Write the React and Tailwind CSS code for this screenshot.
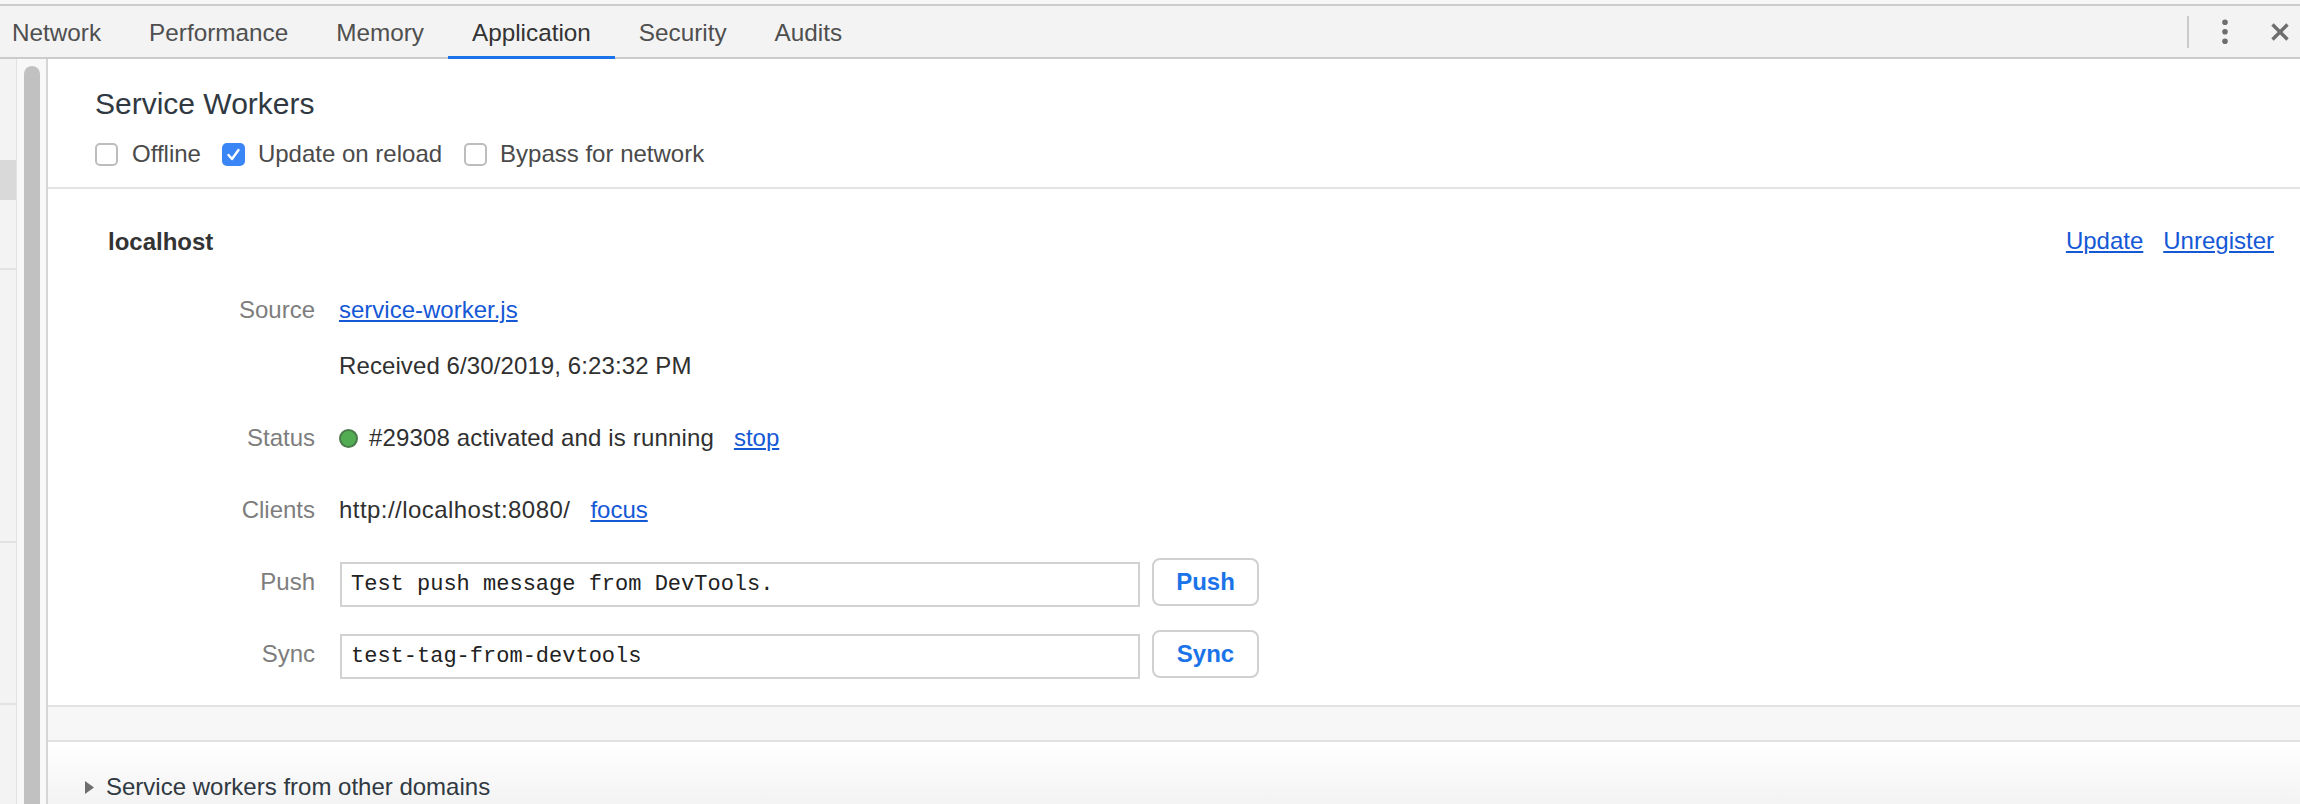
import React from 'react';

const tabs = ['Network', 'Performance', 'Memory', 'Application', 'Security', 'Audits'];

function Checkbox({ checked }) {
  if (checked) {
    return (
      <span className="w-[23px] h-[23px] rounded-[5px] bg-[#3b86f7] flex items-center justify-center shrink-0">
        <svg width="23" height="23" viewBox="0 0 23 23">
          <polyline points="6.5,12 10,16 16.5,7" fill="none" stroke="white" strokeWidth="2.4" strokeLinecap="round" strokeLinejoin="round" />
        </svg>
      </span>
    );
  }
  return <span className="w-[23px] h-[23px] rounded-[5px] border-2 border-[#bdbdbd] bg-white shrink-0" />;
}

function Field({ label, children, className = '' }) {
  return (
    <div className={`flex items-center ${className}`}>
      <div className="w-[207px] shrink-0 text-right text-[#7d7d7d]">{label}</div>
      <div className="ml-[24px] flex items-center">{children}</div>
    </div>
  );
}

function Link({ children, className = '' }) {
  return (
    <a href="#" className={`text-[#1558d6] underline decoration-2 underline-offset-2 ${className}`}>
      {children}
    </a>
  );
}

export default function App() {
  return (
    <div className="w-[2300px] h-[804px] overflow-hidden flex flex-col bg-white font-['Liberation_Sans',Arial,sans-serif] text-[24px] leading-[24px]">
      {/* window strip */}
      <div className="h-[6px] shrink-0 bg-[#f7f7f7] border-b-2 border-[#cdcdcd]" />

      {/* Tab bar */}
      <div className="h-[53px] shrink-0 flex bg-[#f3f3f3] border-b-2 border-[#cbcbcb]">
        <div className="flex -ml-[12px] text-[24.3px]">
          {tabs.map((t) => (
            <div
              key={t}
              className={`relative flex items-center px-[24px] pt-[2px] ${t === 'Application' ? 'text-[#333333]' : 'text-[#4f4f4f]'}`}
            >
              {t}
              {t === 'Application' && <span className="absolute left-0 right-0 bottom-[-2px] h-[3px] bg-[#1a73e8]" />}
            </div>
          ))}
        </div>
        <div className="ml-auto flex items-center pr-[10px]">
          <div className="w-[2px] h-[32px] bg-[#cccccc]" />
          <svg className="ml-[30px]" width="12" height="26" viewBox="0 0 12 26">
            <circle cx="6" cy="3.2" r="2.8" fill="#6e6e6e" />
            <circle cx="6" cy="12.7" r="2.8" fill="#6e6e6e" />
            <circle cx="6" cy="22.2" r="2.8" fill="#6e6e6e" />
          </svg>
          <svg className="ml-[39px]" width="20" height="20" viewBox="0 0 20 20">
            <path d="M2.5 2.5 L17.5 17.5 M17.5 2.5 L2.5 17.5" stroke="#6e6e6e" strokeWidth="3.4" />
          </svg>
        </div>
      </div>

      <div className="flex flex-1 min-h-0">
        {/* Sidebar edge */}
        <div className="w-[17px] shrink-0 flex flex-col bg-[#f3f3f3] border-r border-[#e2e2e2]">
          <div className="h-[101px]" />
          <div className="h-[40px] bg-[#d9d9d9]" />
          <div className="h-[70px] border-b-2 border-[#e2e2e2]" />
          <div className="h-[273px] border-b-2 border-[#e2e2e2]" />
          <div className="h-[162px] border-b-2 border-[#e2e2e2]" />
        </div>

        {/* Scrollbar */}
        <div className="w-[31px] shrink-0 flex bg-[#f8f8f8] pl-[7px] pr-[6px] border-r-2 border-[#d6d6d6]">
          <div className="w-[16px] mt-[7px] rounded-t-full bg-[#c1c1c1]" />
        </div>

        {/* Main content */}
        <div className="flex-1 flex flex-col min-w-0">
          <div className="pt-[27px] pl-[47px] pb-[21px] border-b-2 border-[#e4e4e4]">
            <h1 className="text-[30px] leading-[36px] text-[#303942]">Service Workers</h1>
            <div className="mt-[20px] flex items-center h-[24px] text-[#4a4a4a]">
              <label className="flex items-center">
                <Checkbox />
                <span className="ml-[14px]">Offline</span>
              </label>
              <label className="flex items-center ml-[21px]">
                <Checkbox checked />
                <span className="ml-[13px]">Update on reload</span>
              </label>
              <label className="flex items-center ml-[22px]">
                <Checkbox />
                <span className="ml-[13px]">Bypass for network</span>
              </label>
            </div>
          </div>

          <div className="pt-[41px] pl-[60px] pr-[26px] pb-[27px] border-b-2 border-[#e2e2e2] text-[#303030]">
            <div className="flex justify-between items-center h-[24px]">
              <span className="font-bold text-[#333333]">localhost</span>
              <div className="flex -mt-[3px]">
                <Link>Update</Link>
                <Link className="ml-[20px]">Unregister</Link>
              </div>
            </div>

            <div className="mt-[44px] flex">
              <div className="w-[207px] shrink-0 text-right text-[#7d7d7d]">Source</div>
              <div className="ml-[24px] flex flex-col">
                <Link>service-worker.js</Link>
                <span className="mt-[32px] tracking-[0.1px]">Received 6/30/2019, 6:23:32 PM</span>
              </div>
            </div>

            <Field label="Status" className="mt-[48px]">
              <span className="w-[19px] h-[19px] rounded-full bg-[#52ad52] border-2 border-[#4b7a4b] shrink-0" />
              <span className="ml-[11px] tracking-[0.15px]">#29308 activated and is running</span>
              <Link className="ml-[20px]">stop</Link>
            </Field>

            <Field label="Clients" className="mt-[48px]">
              <span className="tracking-[0.45px]">http://localhost:8080/</span>
              <Link className="ml-[20px]">focus</Link>
            </Field>

            <div className="mt-[36px] flex items-center h-[48px]">
              <div className="w-[207px] shrink-0 text-right text-[#7d7d7d]">Push</div>
              <div className="ml-[25px] mt-[5px] w-[800px] h-[45px] border-2 border-[#d2d2d2] flex items-center px-[9px] font-['Liberation_Mono',monospace] text-[22px] text-[#222222]">
                Test push message from DevTools.
              </div>
              <button className="ml-[12px] w-[107px] h-[48px] rounded-[8px] border-2 border-[#d0d0d0] bg-white text-[#1a73e8] font-bold">
                Push
              </button>
            </div>

            <div className="mt-[24px] flex items-center h-[48px]">
              <div className="w-[207px] shrink-0 text-right text-[#7d7d7d]">Sync</div>
              <div className="ml-[25px] mt-[5px] w-[800px] h-[45px] border-2 border-[#d2d2d2] flex items-center px-[9px] font-['Liberation_Mono',monospace] text-[22px] text-[#222222]">
                test-tag-from-devtools
              </div>
              <button className="ml-[12px] w-[107px] h-[48px] rounded-[8px] border-2 border-[#d0d0d0] bg-white text-[#1a73e8] font-bold">
                Sync
              </button>
            </div>
          </div>

          <div className="h-[35px] shrink-0 bg-[#f7f7f7] border-b-2 border-[#e2e2e2]" />

          <div className="flex-1 pt-[33px] pl-[37px] bg-linear-to-b from-white to-[#f3f3f3]">
            <div className="flex items-center text-[#303942]">
              <svg width="9" height="13" viewBox="0 0 9 13">
                <polygon points="0,0 9,6.5 0,13" fill="#6e6e6e" />
              </svg>
              <span className="ml-[12px]">Service workers from other domains</span>
            </div>
          </div>
        </div>
      </div>
    </div>
  );
}
